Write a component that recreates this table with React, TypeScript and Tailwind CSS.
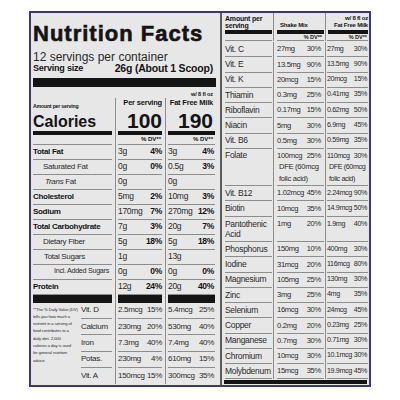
import React from "react";

const SANS = "font-['Liberation_Sans',Arial,sans-serif]";
const L_GRID = "grid grid-cols-[82px_50px_51px]";
const R_GRID = "grid grid-cols-[51px_52px_44px]";

type Cell = React.ReactNode;

const nutrients = [
  { label: "Total Fat", bold: true, pad: "pl-0", a: "3g", ap: "4%", b: "3g", bp: "4%" },
  { label: "Saturated Fat", pad: "pl-[10px]", a: "0g", ap: "0%", b: "0.5g", bp: "3%" },
  { label: "Trans Fat", trans: true, pad: "pl-[12px]", a: "0g", ap: "", b: "0g", bp: "" },
  { label: "Cholesterol", bold: true, pad: "pl-0", a: "5mg", ap: "2%", b: "10mg", bp: "3%" },
  { label: "Sodium", bold: true, pad: "pl-0", a: "170mg", ap: "7%", b: "270mg", bp: "12%" },
  { label: "Total Carbohydrate", bold: true, pad: "pl-0", a: "7g", ap: "3%", b: "20g", bp: "7%" },
  { label: "Dietary Fiber", pad: "pl-[10px]", a: "5g", ap: "18%", b: "5g", bp: "18%" },
  { label: "Total Sugars", pad: "pl-[11px]", a: "1g", ap: "", b: "13g", bp: "" },
  { label: "Incl. Added Sugars", pad: "pl-[21px]", a: "0g", ap: "0%", b: "0g", bp: "0%" },
  { label: "Protein", bold: true, pad: "pl-0", a: "12g", ap: "24%", b: "20g", bp: "40%" },
];

const vits = [
  ["Vit. D", "2.5mcg", "15%", "5.4mcg", "25%"],
  ["Calcium", "230mg", "20%", "530mg", "40%"],
  ["Iron", "7.3mg", "40%", "7.4mg", "40%"],
  ["Potas.", "230mg", "4%", "610mg", "15%"],
  ["Vit. A", "150mcg", "15%", "300mcg", "35%"],
];

const minerals1 = [
  ["Vit. C", "27mg", "30%", "27mg", "30%"],
  ["Vit. E", "13.5mg", "90%", "13.5mg", "90%"],
  ["Vit. K", "20mcg", "15%", "20mcg", "15%"],
  ["Thiamin", "0.3mg", "25%", "0.41mg", "35%"],
  ["Riboflavin", "0.17mg", "15%", "0.62mg", "50%"],
  ["Niacin", "5mg", "30%", "6.9mg", "45%"],
  ["Vit. B6", "0.5mg", "30%", "0.59mg", "35%"],
];

const minerals2 = [
  ["Phosphorus", "150mg", "10%", "400mg", "30%"],
  ["Iodine", "31mcg", "20%", "116mcg", "80%"],
  ["Magnesium", "105mg", "25%", "130mg", "30%"],
  ["Zinc", "3mg", "25%", "4mg", "35%"],
  ["Selenium", "16mcg", "30%", "24mcg", "45%"],
  ["Copper", "0.2mg", "20%", "0.23mg", "25%"],
  ["Manganese", "0.7mg", "30%", "0.71mg", "30%"],
  ["Chromium", "10mcg", "30%", "10.1mcg", "30%"],
  ["Molybdenum", "15mcg", "35%", "19.9mcg", "45%"],
];

function LeftRow({ className, c1, c2, c3, line = true }: { className: string; c1: Cell; c2: Cell; c3: Cell; line?: boolean }) {
  const b = line ? "border-b border-[#8d8d8d]" : "";
  return (
    <div className={`${L_GRID} ${className}`}>
      <div className={`mr-[3px] flex items-center ${b}`}>{c1}</div>
      <div className="border-l border-[#8d8d8d] flex">
        <div className={`ml-[2px] mr-[3px] flex-1 flex items-center justify-between ${b}`}>{c2}</div>
      </div>
      <div className="border-l border-[#8d8d8d] flex">
        <div className={`ml-[2px] mr-[1px] flex-1 flex items-center justify-between ${b}`}>{c3}</div>
      </div>
    </div>
  );
}

function RightRow({ className, c1, c2, c3, align = "items-center" }: { className: string; c1: Cell; c2: Cell; c3: Cell; align?: string }) {
  const b = "border-b border-[#8d8d8d]";
  return (
    <div className={`${R_GRID} ${className}`}>
      <div className={`ml-[3px] mr-[1px] flex ${align} ${b}`}>{c1}</div>
      <div className="border-l border-[#8d8d8d] flex">
        <div className={`ml-[3px] mr-[1px] flex-1 flex ${align} justify-between ${b}`}>{c2}</div>
      </div>
      <div className="border-l border-[#8d8d8d] flex">
        <div className={`ml-[1px] mr-[1px] flex-1 flex ${align} justify-between ${b}`}>{c3}</div>
      </div>
    </div>
  );
}

function BlackBars({ grid, h }: { grid: "left" | "right"; h: string }) {
  if (grid === "left") {
    return (
      <div className={`${L_GRID} ${h}`}>
        <div className="mr-[3px] bg-[#141414]" />
        <div className="border-l border-[#8d8d8d] flex">
          <div className="ml-[2px] mr-[3px] flex-1 bg-[#141414]" />
        </div>
        <div className="border-l border-[#8d8d8d] flex">
          <div className="ml-[2px] mr-[1px] flex-1 bg-[#141414]" />
        </div>
      </div>
    );
  }
  return (
    <div className={`${R_GRID} ${h}`}>
      <div className="ml-[3px] mr-[1px] bg-[#141414]" />
      <div className="border-l border-[#8d8d8d] flex">
        <div className="ml-[3px] mr-[1px] flex-1 bg-[#141414]" />
      </div>
      <div className="border-l border-[#8d8d8d] flex">
        <div className="ml-[2px] mr-[1px] flex-1 bg-[#141414]" />
      </div>
    </div>
  );
}

function LeftPanel() {
  return (
    <div className="w-[189px] pl-[2px] pr-[4px] flex flex-col">
      <div className="mt-[8px] h-[25px] leading-[25px] text-[22px] font-bold tracking-[1px] text-[#141414] whitespace-nowrap [-webkit-text-stroke:0.6px_#141414]">
        Nutrition Facts
      </div>
      <div className="mt-[5px] h-[12px] leading-[12px] text-[12px] whitespace-nowrap">12 servings per container</div>
      <div className="h-[11px] leading-[11px] flex justify-between items-end font-bold text-[#141414] whitespace-nowrap">
        <span className="text-[9px] tracking-[-0.2px]">Serving size</span>
        <span className="text-[10.5px] mr-[3px] tracking-[-0.2px]">26g (About 1 Scoop)</span>
      </div>
      <div className="mt-[3.5px] h-[9px] bg-[#141414]" />

      <div className={`${L_GRID} h-[23px] text-[#141414] font-bold`}>
        <div className="flex items-end mr-[3px]">
          <span className="text-[5.2px] leading-[7px] tracking-[-0.2px] whitespace-nowrap">Amount per serving</span>
        </div>
        <div className="border-l border-[#8d8d8d] mt-[11px] flex items-end justify-end pb-[2px] pr-[3px]">
          <span className="text-[7.5px] leading-[10px] tracking-[-0.2px] whitespace-nowrap">Per serving</span>
        </div>
        <div className="border-l border-[#8d8d8d] mt-[11px] flex flex-col items-end justify-end pb-[2px] pr-[3px]">
          <span className="text-[5.5px] leading-[7px] tracking-[-0.1px] whitespace-nowrap -mt-[9px]">w/ 8 fl oz</span>
          <span className="text-[7.5px] leading-[10px] tracking-[-0.2px] whitespace-nowrap">Fat Free Milk</span>
        </div>
      </div>
      <div className={`${L_GRID} h-[21px] text-[#141414] font-bold`}>
        <div className="flex items-end mr-[3px] pb-[1px]">
          <span className="text-[16px] leading-[18px]">Calories</span>
        </div>
        <div className="border-l border-[#8d8d8d] flex items-end justify-end pb-[1px] pr-[3px]">
          <span className="text-[21px] leading-[21px]">100</span>
        </div>
        <div className="border-l border-[#8d8d8d] flex items-end justify-end pb-[1px] pr-[3px]">
          <span className="text-[21px] leading-[21px]">190</span>
        </div>
      </div>
      <BlackBars grid="left" h="h-[4px]" />
      <LeftRow
        className="h-[10px] text-[6px] font-bold text-[#141414]"
        c1={null}
        c2={<span className="ml-auto mr-[1px]">% DV**</span>}
        c3={<span className="ml-auto mr-[2px]">% DV**</span>}
      />

      {nutrients.map((n) => (
        <LeftRow
          key={n.label}
          className="h-[15px] text-[8.5px] tracking-[-0.3px]"
          c1={
            <span
              className={`${n.pad} whitespace-nowrap ${n.bold ? "font-bold text-[#141414]" : ""} ${
                n.label === "Incl. Added Sugars" ? "text-[7.2px]" : "text-[8px]"
              }`}
            >
              {n.trans ? (
                <>
                  <i>Trans</i> Fat
                </>
              ) : (
                n.label
              )}
            </span>
          }
          c2={
            <>
              <span>{n.a}</span>
              <span className="font-bold text-[#141414]">{n.ap}</span>
            </>
          }
          c3={
            <>
              <span>{n.b}</span>
              <span className="font-bold text-[#141414] mr-[1px]">{n.bp}</span>
            </>
          }
        />
      ))}

      <BlackBars grid="left" h="h-[8px]" />

      <div className="flex h-[82px]">
        <div className="w-[46px] pt-[3px] text-[4.2px] leading-[7.3px] tracking-[-0.1px] whitespace-nowrap overflow-hidden">
          **The % Daily Value (DV)
          <br />
          tells you how much a
          <br />
          nutrient in a serving of
          <br />
          food contributes to a
          <br />
          daily diet. 2,000
          <br />
          calories a day is used
          <br />
          for general nutrition
          <br />
          advice.
        </div>
        <div className="flex-1 flex flex-col">
          {vits.map((v, i) => (
            <div key={v[0]} className="grid grid-cols-[36px_50px_51px] h-[16.4px] text-[8px] tracking-[-0.3px]">
              <div className={`ml-[2px] mr-[3px] flex items-center ${i < 4 ? "border-b border-[#8d8d8d]" : ""}`}>
                <span className="whitespace-nowrap">{v[0]}</span>
              </div>
              <div className="border-l border-[#8d8d8d] flex">
                <div className={`ml-[2px] mr-[3px] flex-1 flex items-center justify-between ${i < 4 ? "border-b border-[#8d8d8d]" : ""}`}>
                  <span>{v[1]}</span>
                  <span>{v[2]}</span>
                </div>
              </div>
              <div className="border-l border-[#8d8d8d] flex">
                <div className={`ml-[2px] mr-[1px] flex-1 flex items-center justify-between ${i < 4 ? "border-b border-[#8d8d8d]" : ""}`}>
                  <span>{v[3]}</span>
                  <span className="mr-[1px]">{v[4]}</span>
                </div>
              </div>
            </div>
          ))}
        </div>
      </div>
    </div>
  );
}

function MRow({ m, first }: { m: string[]; first?: boolean }) {
  return (
    <RightRow
      className={`${first ? "h-[16.75px] pt-[1.5px]" : "h-[15.25px]"} whitespace-nowrap`}
      c1={<span className="text-[8.5px] tracking-[-0.3px]">{m[0]}</span>}
      c2={
        <>
          <span className="text-[7.6px] tracking-[-0.3px]">{m[1]}</span>
          <span className="text-[7.6px] tracking-[-0.3px] pr-[3px]">{m[2]}</span>
        </>
      }
      c3={
        <>
          <span className="text-[7.2px] tracking-[-0.4px]">{m[3]}</span>
          <span className="text-[7.2px] tracking-[-0.4px] pr-[1px]">{m[4]}</span>
        </>
      }
    />
  );
}

function RightPanel() {
  return (
    <div className="w-[149px] border-l-2 border-[#5c5c5c] flex flex-col">
      <div className={`${R_GRID} h-[17px] text-[#141414] font-bold whitespace-nowrap`}>
        <div className="pl-[3px] flex flex-col justify-end pb-[1px] text-[7px] leading-[7px] tracking-[-0.2px]">
          <span>Amount per</span>
          <span>serving</span>
        </div>
        <div className="border-l border-[#8d8d8d] pl-[6px] flex items-end pb-[1px] text-[6px] leading-[7px] tracking-[-0.2px]">
          <span>Shake Mix</span>
        </div>
        <div className="border-l border-[#8d8d8d] pr-[1px] flex flex-col items-end justify-end pb-[1px] text-[6px] leading-[7px] tracking-[-0.2px]">
          <span>w/ 8 fl oz</span>
          <span>Fat Free Milk</span>
        </div>
      </div>
      <BlackBars grid="right" h="h-[3.5px]" />
      <RightRow
        className="h-[7px] text-[5.5px] leading-[6px] font-bold text-[#141414]"
        c1={null}
        c2={<span className="ml-auto pr-[2px]">% DV**</span>}
        c3={<span className="ml-auto pr-[1px]">% DV**</span>}
      />
      {minerals1.map((m, i) => (
        <MRow key={m[0]} m={m} first={i === 0} />
      ))}
      <RightRow
        className="h-[37.25px] leading-[11.5px] whitespace-nowrap"
        align="items-start pt-[1px]"
        c1={<span className="text-[8.5px] tracking-[-0.3px]">Folate</span>}
        c2={
          <div className="flex-1 text-[7.6px] tracking-[-0.3px]">
            <div className="flex justify-between">
              <span>100mcg</span>
              <span className="pr-[3px]">25%</span>
            </div>
            <div className="pl-[2px]">DFE (60mcg</div>
            <div className="pl-[2px]">folic acid)</div>
          </div>
        }
        c3={
          <div className="flex-1 text-[7.2px] tracking-[-0.4px]">
            <div className="flex justify-between">
              <span>110mcg</span>
              <span className="pr-[1px]">30%</span>
            </div>
            <div className="pl-[2px]">DFE (60mcg</div>
            <div className="pl-[2px]">folic acid)</div>
          </div>
        }
      />
      <MRow m={["Vit. B12", "1.02mcg", "45%", "2.24mcg", "90%"]} />
      <MRow m={["Biotin", "10mcg", "35%", "14.9mcg", "50%"]} />
      <RightRow
        className="h-[25.5px] leading-[10px] whitespace-nowrap"
        align="items-start pt-[2px]"
        c1={
          <span className="text-[8.5px] tracking-[-0.3px]">
            Pantothenic
            <br />
            Acid
          </span>
        }
        c2={
          <>
            <span className="text-[7.6px] tracking-[-0.3px]">1mg</span>
            <span className="text-[7.6px] tracking-[-0.3px] pr-[3px]">20%</span>
          </>
        }
        c3={
          <>
            <span className="text-[7.2px] tracking-[-0.4px]">1.9mg</span>
            <span className="text-[7.2px] tracking-[-0.4px] pr-[1px]">40%</span>
          </>
        }
      />
      {minerals2.map((m) => (
        <MRow key={m[0]} m={m} />
      ))}
      <div className="mt-[0.75px] mx-[2px] h-[3.5px] bg-[#141414]" />
    </div>
  );
}

export default function App() {
  return (
    <div className="w-[400px] h-[400px] bg-white pl-[29px] pt-[11px]">
      <div className={`w-[342px] h-[376px] border-2 border-[#3d3a6b] bg-[#e7e7e7] flex overflow-hidden text-[#2a2a2a] ${SANS}`}>
        <LeftPanel />
        <RightPanel />
      </div>
    </div>
  );
}
